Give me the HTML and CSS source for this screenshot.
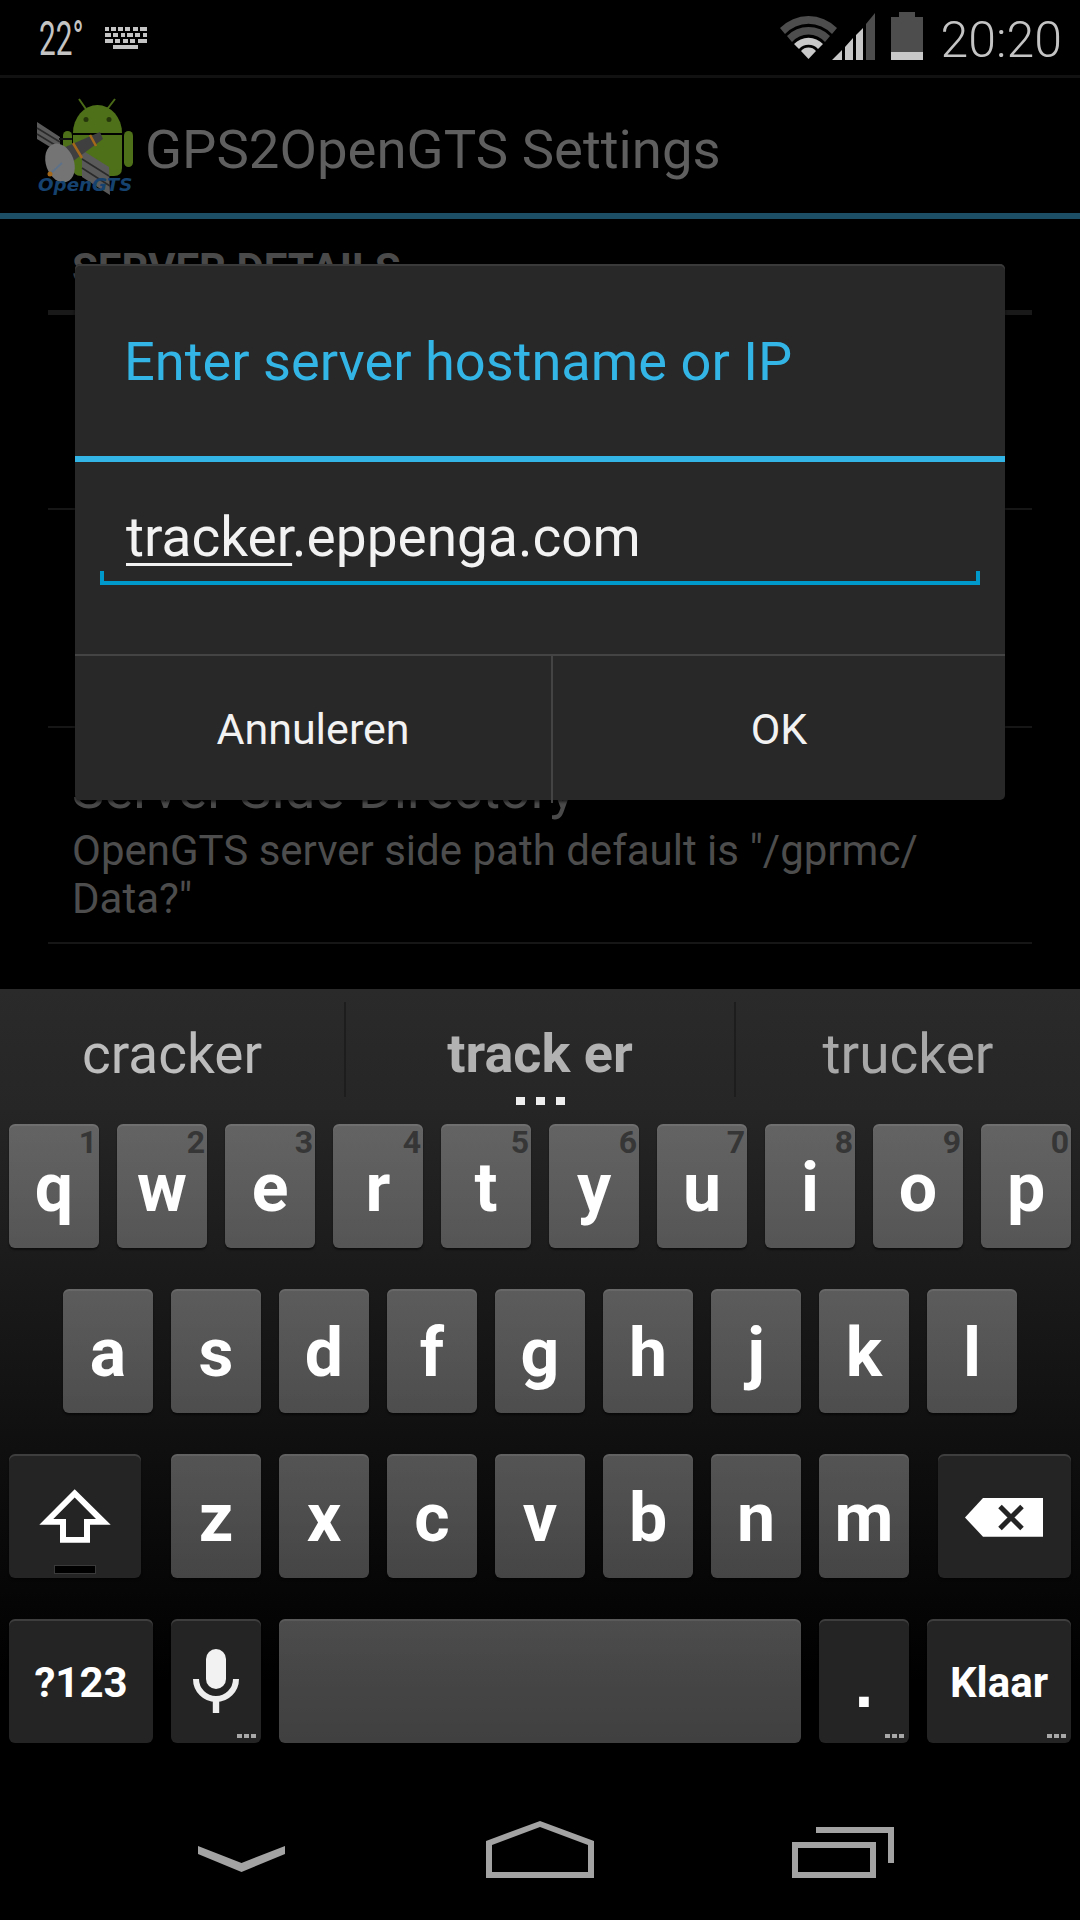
FILE: index.html
```html
<!DOCTYPE html>
<html lang="en">
<head>
<meta charset="utf-8">
<title>GPS2OpenGTS Settings</title>
<link rel="stylesheet" href="styles.css">
</head>
<body>
<div class="screen">
  <header class="status">
    <div class="status-left">
      <span class="temp">22°</span>
      <svg class="kbd-icon" width="42" height="22" viewBox="0 0 42 22" fill="#c4c4c4">
        <path d="M0 0h4v4H0zM6 0h5v4H6zM13 0h5v4h-5zM20 0h5v4h-5zM28 0h5v4h-5zM35 0h7v4h-7z"/>
        <path d="M0 6h6v4H0zM8 6h5v4H8zM16 6h4v4h-4zM22 6h6v4h-6zM30 6h5v4h-5zM38 6h4v4h-4z"/>
        <path d="M0 12h8v4H0zM10 12h5v4h-5zM18 12h5v4h-5zM25 12h5v4h-5zM33 12h9v4h-9z"/>
        <path d="M8 18h25v4H8z"/>
      </svg>
    </div>
    <div class="status-right">
      <svg class="sys-icons" width="143" height="50" viewBox="781 11 143 50">
        <path d="M781 28 A40 40 0 0 1 838 28 L833 34 A32 32 0 0 0 786 34 Z" fill="#4d4d4d"/>
        <path d="M788 36 A30 30 0 0 1 831 36 L826 42 A22 22 0 0 0 793 42 Z" fill="#4d4d4d"/>
        <path d="M795 44 A20 20 0 0 1 824 44 L819 49 A13 13 0 0 0 800 49 Z" fill="#c8c8c8"/>
        <path d="M802 51 A10 10 0 0 1 817 51 L809.500 59 Z" fill="#c8c8c8"/>
        <path d="M833 60 L843 50 V60 Z M846 47 L854 38 V60 H846 Z M857 35 L864 28 V60 H857 Z" fill="#c8c8c8"/>
        <path d="M867 24 L876 13 V60 H867 Z" fill="#4d4d4d"/>
        <path d="M900 12 H916 V17 H924 V52 H892 V17 H900 Z" fill="#4d4d4d"/>
        <path d="M892 52 H924 V60 H892 Z" fill="#c8c8c8"/>
      </svg>
      <span class="clock">20:20</span>
    </div>
  </header>

  <div class="actionbar">
    <svg class="app-logo" width="117" height="135" viewBox="30 78 117 135">
      <path d="M79 99 L88 112 M115 99 L105 112" stroke="#4a6a17" stroke-width="2" fill="none"/>
      <path d="M73 133 A24.500 28 0 0 1 122 133 Z" fill="#4e7018"/>
      <circle cx="86" cy="119.500" r="2.500" fill="#25370b"/>
      <circle cx="109" cy="119.500" r="2.500" fill="#25370b"/>
      <path d="M73 135 H122 V168 Q122 176 114 176 H81 Q73 176 73 168 Z" fill="#4e7018"/>
      <rect x="63" y="131" width="9" height="36" rx="4.500" fill="#4e7018"/>
      <rect x="124" y="131" width="9" height="36" rx="4.500" fill="#4e7018"/>
      <path d="M37 122 L60 137 L60 153 L37 139 Z" fill="#5a5a5a"/>
      <path d="M37 128 L60 142 M37 134 L60 148" stroke="#2a2a2a" stroke-width="1.500"/>
      <path d="M82 150 L109 167 L110 195 L82 177 Z" fill="#5a5a5a"/>
      <path d="M82 159 L109 176 M82 168 L110 186" stroke="#2a2a2a" stroke-width="1.500"/>
      <path d="M59 139 L72 139" stroke="#111" stroke-width="2"/>
      <path d="M63 148 L100 132 L103 139 L72 162 Z" fill="#3f3f3f"/>
      <path d="M73 143 L82 158 M90 135 L96 146" stroke="#a4681a" stroke-width="2.500" fill="none"/>
      <ellipse cx="60" cy="163" rx="14" ry="20" transform="rotate(-20 60 163)" fill="#747474"/>
      <path d="M50 174 L62 163" stroke="#5d7288" stroke-width="2"/>
      <circle cx="50" cy="174" r="2.500" fill="#a4681a"/>
      <text class="logo-text" x="38" y="191">OpenGTS</text>
    </svg>
    <h1 class="app-title">GPS2OpenGTS Settings</h1>
  </div>

  <main class="list">
    <div class="list-head">SERVER DETAILS</div>
    <div class="list-row row-a"></div>
    <div class="list-row row-b"></div>
    <div class="list-row row-c">
      <div class="row-title">Server Side Directory</div>
      <div class="row-summary">OpenGTS server side path default is "/gprmc/<br>Data?"</div>
    </div>
  </main>

  <section class="keyboard">
    <div class="strip">
      <div class="cand cand-l">cracker</div>
      <div class="cand cand-m"><b>track er</b><span class="cand-dots"><i></i><i></i><i></i></span></div>
      <div class="cand cand-r">trucker</div>
    </div>
    <div class="keys">
      <div class="keyrow">
        <div class="key">q<span class="hint">1</span></div>
        <div class="key">w<span class="hint">2</span></div>
        <div class="key">e<span class="hint">3</span></div>
        <div class="key">r<span class="hint">4</span></div>
        <div class="key">t<span class="hint">5</span></div>
        <div class="key">y<span class="hint">6</span></div>
        <div class="key">u<span class="hint">7</span></div>
        <div class="key">i<span class="hint">8</span></div>
        <div class="key">o<span class="hint">9</span></div>
        <div class="key">p<span class="hint">0</span></div>
      </div>
      <div class="keyrow keyrow-home">
        <div class="key">a</div><div class="key">s</div><div class="key">d</div><div class="key">f</div><div class="key">g</div><div class="key">h</div><div class="key">j</div><div class="key">k</div><div class="key">l</div>
      </div>
      <div class="keyrow">
        <div class="key key-fn key-shift">
          <svg class="key-svg" viewBox="0 0 132 124">
            <path fill-rule="evenodd" fill="#fff" d="M65.700 35.300 L101.700 70.700 H81 V88.700 H51 V70.700 H30.300 Z M65.700 43.500 L44.300 65 H57 V83 H75 V65 H87 Z"/>
            <rect x="45.500" y="111.500" width="41" height="8" fill="#000" stroke="#3a3a3a"/>
          </svg>
        </div>
        <div class="key">z</div><div class="key">x</div><div class="key">c</div><div class="key">v</div><div class="key">b</div><div class="key">n</div><div class="key">m</div>
        <div class="key key-fn key-back">
          <svg class="key-svg" viewBox="0 0 133 124">
            <path fill="#fff" d="M27 63.500 L45 44 H105 V82.700 H45 Z"/>
            <path d="M62 52.500 L84 74.500 M84 52.500 L62 74.500" stroke="#242424" stroke-width="5" fill="none"/>
          </svg>
        </div>
      </div>
      <div class="keyrow">
        <div class="key key-fn key-wide key-label">?123</div>
        <div class="key key-fn key-mic">
          <svg class="key-svg" viewBox="0 0 90 124">
            <rect x="35" y="30" width="20" height="40" rx="10" fill="#f2f2f2"/>
            <path d="M25 60 A20 20 0 0 0 65 60" stroke="#eee" stroke-width="6" fill="none"/>
            <rect x="41.800" y="80" width="6.400" height="14" fill="#eee"/>
          </svg>
          <span class="more"></span>
        </div>
        <div class="key key-space"></div>
        <div class="key key-fn key-period">.<span class="more"></span></div>
        <div class="key key-fn key-wide key-label">Klaar<span class="more"></span></div>
      </div>
    </div>
  </section>

  <nav class="navbar">
    <svg class="nav-back" width="87" height="26" viewBox="198 1846 87 26" fill="#a3a3a3">
      <path d="M198 1846 L241.500 1863 L285 1846 V1854 L241.500 1872 L198 1854 Z"/>
    </svg>
    <svg class="nav-home" width="108" height="57" viewBox="486 1821 108 57" fill="#a3a3a3">
      <path fill-rule="evenodd" d="M540 1821 L594 1841 V1878 H486 V1841 Z M540 1827 L492 1845 V1872 H588 V1845 Z"/>
    </svg>
    <svg class="nav-recent" width="102" height="51" viewBox="792 1827 102 51" fill="#a3a3a3">
      <path fill-rule="evenodd" d="M792 1842 H876 V1878 H792 Z M798 1848 V1872 H870 V1848 Z"/>
      <path d="M816 1827 H894 V1863 H888 V1833 H816 Z"/>
    </svg>
  </nav>

  <div class="dialog">
    <div class="dlg-title">Enter server hostname or IP</div>
    <div class="dlg-rule"></div>
    <div class="dlg-body">
      <div class="field-text"><span class="composing">tracker</span>.eppenga.com</div>
      <div class="field-line"></div>
    </div>
    <div class="dlg-buttons">
      <div class="dlg-btn dlg-btn-left">Annuleren</div>
      <div class="dlg-btn dlg-btn-right">OK</div>
    </div>
  </div>
</div>
</body>
</html>
```

FILE: styles.css
```css
* { box-sizing: border-box; }
html, body { margin: 0; padding: 0; background: #000; }
body { font-family: Roboto, "Liberation Sans", sans-serif; }

.screen {
  position: relative;
  width: 1080px;
  height: 1920px;
  overflow: hidden;
  background: #000;
  display: flex;
  flex-direction: column;
}

/* status bar */
.status {
  height: 78px;
  flex: none;
  border-bottom: 3px solid #111;
  display: flex;
  justify-content: space-between;
  align-items: flex-start;
}
.status-left { display: flex; align-items: flex-start; padding: 15px 0 0 39px; }
.temp {
  display: block;
  width: 66px;
  font-size: 48px;
  line-height: 48px;
  font-weight: 400;
  color: #c4c4c4;
  transform: scaleX(.62);
  transform-origin: left top;
}
.kbd-icon { margin-top: 12px; }
.status-right { display: flex; align-items: flex-start; padding: 11px 18px 0 0; }
.sys-icons { flex: none; }
.clock {
  margin: 4px 0 0 18px;
  font-size: 50px;
  line-height: 50px;
  font-weight: 300;
  color: #c4c4c4;
}

/* action bar */
.actionbar {
  height: 141px;
  flex: none;
  border-bottom: 6px solid #1c4e66;
  display: flex;
  align-items: flex-start;
  padding-left: 30px;
}
.app-logo { flex: none; }
.logo-text {
  font-family: "DejaVu Sans", sans-serif;
  font-style: italic;
  font-weight: 700;
  font-size: 18.300px;
  fill: #15426e;
}
.app-title {
  margin: 39px 0 0 -2px;
  font-size: 54.500px;
  line-height: 64px;
  font-weight: 400;
  color: #5f5f5f;
  white-space: nowrap;
}

/* list behind the dialog */
.list { flex: 1; padding: 0 48px; }
.list-head {
  height: 96px;
  padding: 26px 0 0 24px;
  border-bottom: 5px solid #191919;
  font-size: 42px;
  line-height: 48px;
  font-weight: 700;
  color: #4a4a4a;
}
.list-row { border-bottom: 2px solid #161616; padding-left: 24px; }
.row-a { height: 195px; }
.row-b { height: 218px; }
.row-c { height: 216px; padding-top: 31px; }
.row-title { font-size: 54.500px; line-height: 60px; color: #4a4a4a; white-space: nowrap; }
.row-summary { margin-top: 8px; font-size: 42px; line-height: 48px; color: #4d4d4d; white-space: nowrap; }

/* keyboard */
.keyboard { flex: none; height: 771px; display: flex; flex-direction: column; }
.strip {
  height: 121px;
  flex: none;
  background: linear-gradient(#2a2a2a, #262626);
  display: flex;
  padding-top: 13px;
  color: #bdbdbd;
}
.cand {
  height: 95px;
  padding-top: 16px;
  font-size: 55px;
  line-height: 72px;
  text-align: center;
}
.cand-l { width: 344px; }
.cand-m { width: 392px; font-size: 54px; border-left: 2px solid #1d1d1d; border-right: 2px solid #1d1d1d; color: #b2b2b2; display: flex; flex-direction: column; align-items: center; }
.cand-m b { font-weight: 700; }
.cand-r { flex: 1; color: #a8a8a8; }
.cand-dots { display: flex; gap: 11px; margin-top: 7px; }
.cand-dots i { display: block; width: 9px; height: 8px; background: #eee; }

.keys {
  flex: 1;
  padding-top: 14px;
  background: linear-gradient(#252525, #000 88%);
  display: flex;
  flex-direction: column;
  gap: 41px;
}
.keyrow { display: flex; gap: 18px; padding-left: 9px; height: 124px; }
.keyrow-home { padding-left: 63px; }
.key {
  position: relative;
  width: 90px;
  height: 124px;
  flex: none;
  padding-top: 30px;
  border-radius: 6px;
  background: linear-gradient(rgba(255,255,255,.29), rgba(255,255,255,.25));
  box-shadow: inset 0 2px 0 rgba(255,255,255,.08), 0 2px 2px rgba(0,0,0,.5);
  color: #fff;
  font-size: 68px;
  line-height: 68px;
  font-weight: 700;
  text-align: center;
}
.key-fn {
  background: #242424;
  box-shadow: inset 0 2px 0 rgba(255,255,255,.12), 0 2px 2px rgba(0,0,0,.5);
}
.key-shift { width: 132px; margin-right: 12px; padding: 0; }
.key-back { width: 133px; margin-left: 11px; padding: 0; }
.key-wide { width: 144px; }
.key-label { font-size: 42px; line-height: 42px; padding-top: 43px; }
.key-mic { padding: 0; }
.key-period { font-family: "Liberation Sans", sans-serif; }
.key-space { width: 522px; }
.key-svg { display: block; width: 100%; height: 100%; }
.more {
  position: absolute;
  right: 5px;
  bottom: 5px;
  width: 19px;
  height: 4px;
  background: repeating-linear-gradient(90deg, #a8a8a8 0 5px, transparent 5px 7px);
}
.hint {
  position: absolute;
  top: 0;
  right: 2px;
  font-family: Roboto, sans-serif;
  font-size: 32px;
  line-height: 36px;
  font-weight: 700;
  color: #363636;
}

/* navigation bar */
.navbar { flex: none; height: 160px; display: flex; align-items: flex-start; padding-left: 198px; }
.navbar svg { flex: none; display: block; }
.nav-back { margin-top: 86px; }
.nav-home { margin: 61px 0 0 201px; }
.nav-recent { margin: 67px 0 0 198px; }

/* dialog */
.dialog {
  position: absolute;
  left: 75px;
  top: 264px;
  width: 930px;
  height: 536px;
  border-radius: 5px;
  background: #282828;
  box-shadow: inset 0 2px 0 #3a3a3a, 0 2px 3px rgba(0,0,0,.6);
  display: flex;
  flex-direction: column;
}
.dlg-title {
  height: 192px;
  flex: none;
  padding: 66px 0 0 49px;
  font-size: 54.200px;
  line-height: 64px;
  color: #33b5e5;
  white-space: nowrap;
}
.dlg-rule { height: 6px; flex: none; background: #33b5e5; }
.dlg-body { height: 192px; flex: none; padding: 43px 25px 0 25px; }
.field-text {
  padding-left: 26px;
  font-size: 55px;
  line-height: 64px;
  color: #f2f2f2;
  white-space: nowrap;
}
.composing { text-decoration: underline; text-decoration-thickness: 3px; text-underline-offset: 7px; }
.field-line {
  height: 14px;
  margin-top: 2px;
  border: 4px solid #0099cc;
  border-top: 0;
}
.dlg-buttons { flex: 1; display: flex; border-top: 2px solid #444; }
.dlg-btn {
  font-size: 43px;
  line-height: 147px;
  text-align: center;
  color: #f2f2f2;
}
.dlg-btn-left { width: 478px; border-right: 2px solid #444; }
.dlg-btn-right { flex: 1; }
```
